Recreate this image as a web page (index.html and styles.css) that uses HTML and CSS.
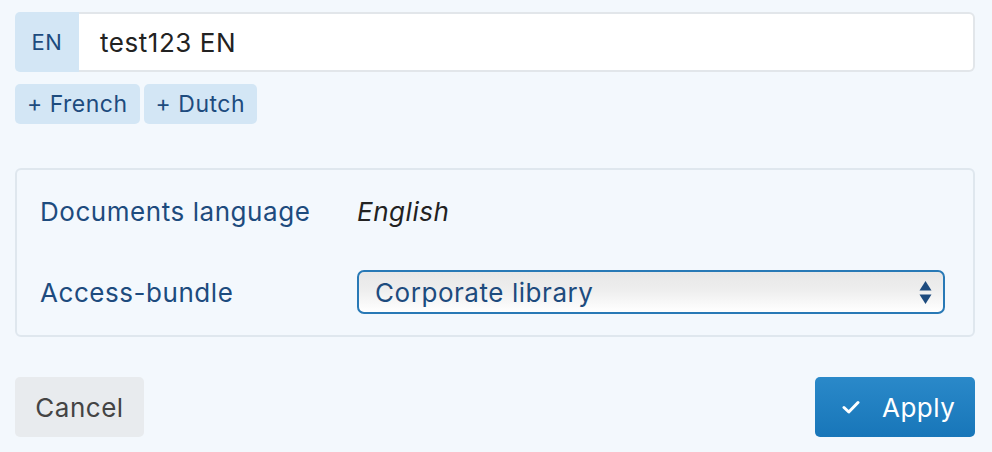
FILE: index.html
```html
<!DOCTYPE html>
<html lang="en">
<head>
<meta charset="utf-8">
<title>Document settings</title>
<link rel="stylesheet" href="styles.css">
</head>
<body>
<div class="page">
  <div class="input-group">
    <span class="addon">EN</span>
    <div class="text-input">test123 EN</div>
  </div>
  <div class="lang-buttons">
    <button class="lang-btn">+ French</button>
    <button class="lang-btn">+ Dutch</button>
  </div>
  <div class="panel">
    <div class="row">
      <div class="label">Documents language</div>
      <div class="value"><em>English</em></div>
    </div>
    <div class="row">
      <div class="label">Access-bundle</div>
      <div class="value">
        <div class="select">
          <span>Corporate library</span>
          <svg class="arrows" width="13" height="25" viewBox="0 0 13 25"><path d="M6.5 1 L12.5 10.5 L0.5 10.5 Z" fill="#1d4b7e"/><path d="M0.5 14.5 L12.5 14.5 L6.5 24 Z" fill="#1d4b7e"/></svg>
        </div>
      </div>
    </div>
  </div>
  <div class="actions">
    <button class="btn cancel">Cancel</button>
    <button class="btn apply"><svg class="check" width="18" height="14" viewBox="0 0 18 14"><path d="M2 7.5 L6.8 12 L16 2.5" fill="none" stroke="#fff" stroke-width="3" stroke-linecap="round" stroke-linejoin="round"/></svg><span>Apply</span></button>
  </div>
</div>
</body>
</html>
```

FILE: styles.css
```css
html, body {
  margin: 0;
  padding: 0;
  background: #f3f8fd;
}
body {
  font-family: Inter, "Noto Sans", "Liberation Sans", sans-serif;
  color: #1d4b7e;
  letter-spacing: 0.55px;
}
.page {
  padding: 12px 17px 0 15px;
}
.input-group {
  display: flex;
  height: 60px;
}
.addon {
  width: 64px;
  background: #d3e6f5;
  border-radius: 5px 0 0 5px;
  display: flex;
  align-items: center;
  justify-content: center;
  font-size: 22px;
  color: #1d4b7e;
}
.text-input {
  flex: 1;
  background: #fff;
  border: 2px solid #e2e6ea;
  border-left: none;
  border-radius: 0 6px 6px 0;
  display: flex;
  align-items: center;
  padding-left: 21px;
  font-size: 26px;
  color: #222;
}
.lang-buttons {
  display: flex;
  gap: 4px;
  margin-top: 12px;
}
.lang-btn {
  height: 40px;
  border: none;
  border-radius: 5px;
  background: #d3e6f5;
  color: #1d4b7e;
  font-family: inherit;
  letter-spacing: 0.5px;
  font-size: 23px;
  padding: 0 12px;
}
.panel {
  margin-top: 44px;
  border: 2px solid #dfe7ee;
  border-radius: 6px;
  padding: 19px 28px 21px 23px;
  display: flex;
  flex-direction: column;
  gap: 37px;
}
.row {
  display: flex;
  align-items: center;
  height: 44px;
}
.label {
  width: 317px;
  font-size: 26px;
  color: #1d4b7e;
}
.value {
  flex: 1;
  font-size: 26px;
  color: #222;
}
.select {
  height: 44px;
  box-sizing: border-box;
  border: 2px solid #2879b6;
  border-radius: 7px;
  background: linear-gradient(to bottom, #e7e7e7 0%, #eeeeee 45%, #ffffff 100%);
  display: flex;
  align-items: center;
  justify-content: space-between;
  padding: 0 11px 0 16px;
  font-size: 26px;
  color: #1d4b7e;
}
.arrows {
  display: block;
}
.actions {
  display: flex;
  justify-content: space-between;
  margin-top: 40px;
}
.btn {
  height: 60px;
  border: none;
  border-radius: 5px;
  font-family: inherit;
  letter-spacing: 0.5px;
  font-size: 26px;
  display: flex;
  align-items: center;
}
.cancel {
  width: 129px;
  justify-content: center;
  background: #e8ebee;
  color: #444;
}
.apply {
  width: 160px;
  padding: 0 0 0 27px;
  background: linear-gradient(to bottom, #2a89c9, #1876b9);
  color: #fff;
  gap: 22px;
}
.check {
  display: block;
}
```
